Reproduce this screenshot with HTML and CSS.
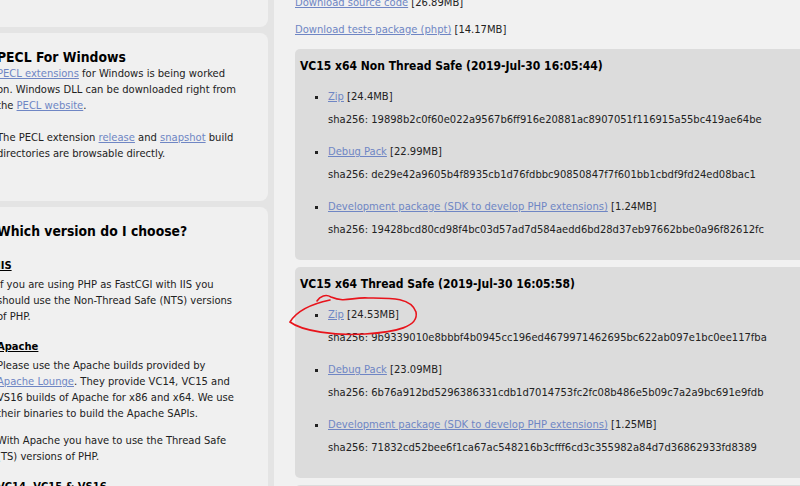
FILE: index.html
```html
<!DOCTYPE html>
<html lang="en">
<head>
    <meta charset="UTF-8">
    <meta name="viewport" content="width=device-width, initial-scale=1.0">
    <title>PHP For Windows: Binaries and sources Releases</title>
    <link rel="stylesheet" href="styles.css">
</head>
<body>
    <div class="page">
        <aside class="side">
            <section class="panel panel-top"></section>
            <section class="panel">
                <h3>PECL For Windows</h3>
                <p><a href="#">PECL extensions</a> for Windows is being worked<br>on. Windows DLL can be downloaded right from<br>the <a href="#">PECL website</a>.</p>
                <p class="gap">The PECL extension <a href="#">release</a> and <a href="#">snapshot</a> build<br>directories are browsable directly.</p>
            </section>
            <section class="panel">
                <h3>Which version do I choose?</h3>
                <h4 class="first">IIS</h4>
                <p>If you are using PHP as FastCGI with IIS you<br>should use the Non-Thread Safe (NTS) versions<br>of PHP.</p>
                <h4>Apache</h4>
                <p>Please use the Apache builds provided by<br><a href="#">Apache Lounge</a>. They provide VC14, VC15 and<br>VS16 builds of Apache for x86 and x64. We use<br>their binaries to build the Apache SAPIs.</p>
                <p>With Apache you have to use the Thread Safe<br>(TS) versions of PHP.</p>
                <h4>VC14, VC15 &amp; VS16</h4>
            </section>
        </aside>

        <main class="content">
            <p><a href="#">Download source code</a> [26.89MB]</p>
            <p><a href="#">Download tests package (phpt)</a> [14.17MB]</p>

            <div class="build">
                <h4>VC15 x64 Non Thread Safe (2019-Jul-30 16:05:44)</h4>
                <ul>
                    <li><a href="#">Zip</a> [24.4MB]
                        <span class="sha">sha256: 19898b2c0f60e022a9567b6ff916e20881ac8907051f116915a55bc419ae64be</span></li>
                    <li><a href="#">Debug Pack</a> [22.99MB]
                        <span class="sha">sha256: de29e42a9605b4f8935cb1d76fdbbc90850847f7f601bb1cbdf9fd24ed08bac1</span></li>
                    <li><a href="#">Development package (SDK to develop PHP extensions)</a> [1.24MB]
                        <span class="sha">sha256: 19428bcd80cd98f4bc03d57ad7d584aedd6bd28d37eb97662bbe0a96f82612fc</span></li>
                </ul>
            </div>

            <div class="build">
                <h4>VC15 x64 Thread Safe (2019-Jul-30 16:05:58)</h4>
                <ul>
                    <li><a href="#">Zip</a> [24.53MB]
                        <span class="sha">sha256: 9b9339010e8bbbf4b0945cc196ed4679971462695bc622ab097e1bc0ee117fba</span></li>
                    <li><a href="#">Debug Pack</a> [23.09MB]
                        <span class="sha">sha256: 6b76a912bd5296386331cdb1d7014753fc2fc08b486e5b09c7a2a9bc691e9fdb</span></li>
                    <li><a href="#">Development package (SDK to develop PHP extensions)</a> [1.25MB]
                        <span class="sha">sha256: 71832cd52bee6f1ca67ac548216b3cfff6cd3c355982a84d7d36862933fd8389</span></li>
                </ul>
            </div>

            <div class="build"></div>
        </main>
    </div>

    <!-- hand drawn red mark from the screenshot -->
    <svg class="mark" width="800" height="486" viewBox="0 0 800 486">
        <path d="M317 301 C320 296 326 294 331 297 C345 303 352 297 368 298 C390 298 411 297 416 312 C419 327 396 332 365 334 C335 336 302 331 290 322 C296 312 311 304 330 300" />
    </svg>
</body>
</html>
```

FILE: styles.css
```css
body {
    margin: 0;
    font-family: "DejaVu Sans Condensed", "DejaVu Sans", sans-serif;
    font-stretch: condensed;
    font-size: 11.1px;
    line-height: 16px;
    color: #222;
    background-color: #e4e4e4;
    overflow: hidden;
}
a {
    color: #6f86c4;
}
.page {
    display: flex;
    width: 800px;
    height: 486px;
    overflow: hidden;
}
.side {
    flex: 0 0 288px;
    margin-left: -20px;
    display: flex;
    flex-direction: column;
    gap: 6px;
}
.panel {
    background-color: #f0f0f0;
    border-radius: 0 8px 8px 0;
    padding: 15px 10px 28px 17px;
}
.panel-top {
    flex: 0 0 37px;
    padding: 0;
    margin-top: -10px;
}
.panel h3 {
    margin: 0;
    font-size: 13.8px;
    line-height: 18px;
    color: #000;
}
.panel h4 {
    margin: 14px 0 3px;
    font-size: 11.1px;
    color: #000;
    text-decoration: underline;
}
.panel h4.first {
    margin-top: 18px;
}
.panel p {
    margin: 0 0 11px;
}
.panel p.gap {
    margin-top: 16px;
}
.content {
    flex: 1;
    margin-left: 6px;
    background-color: #f1f1f1;
    padding: 0 0 0 21px;
    margin-top: -5px;
}
.content p {
    margin: 0 0 11px;
    white-space: nowrap;
}
.build {
    background-color: #dcdcdc;
    border-radius: 5px 0 0 5px;
    padding: 9px 0 22px 5px;
    margin-bottom: 7px;
    white-space: nowrap;
}
.build h4 {
    margin: 0;
    font-size: 12px;
    color: #000;
}
.build ul {
    margin: 15px 0 0;
    padding-left: 28px;
    list-style: square;
}
.build li + li {
    margin-top: 16px;
}
.sha {
    display: block;
    margin-top: 7px;
}
.mark {
    position: absolute;
    left: 0;
    top: 0;
    pointer-events: none;
}
.mark path {
    fill: none;
    stroke: #e8141c;
    stroke-width: 1.6;
    stroke-linecap: round;
}
```
